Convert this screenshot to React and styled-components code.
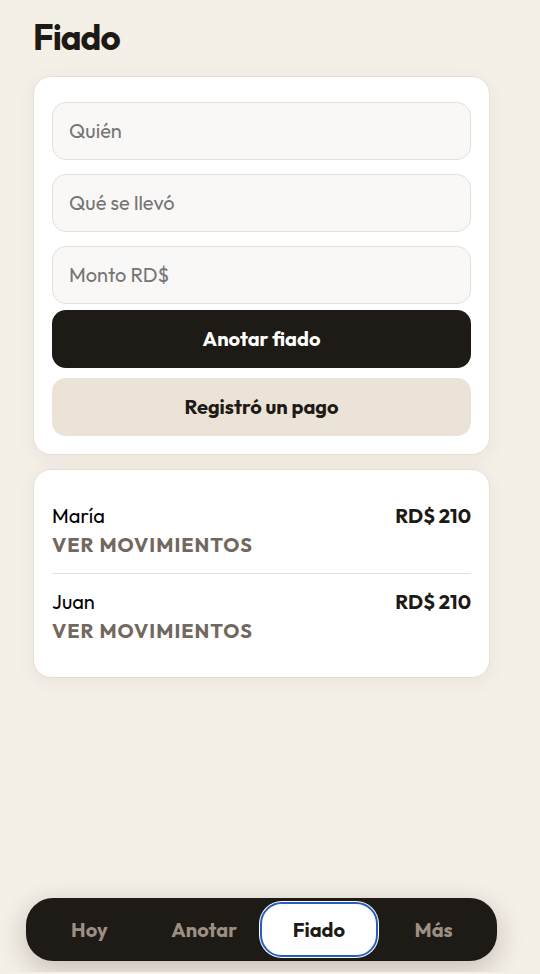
import React from 'react';
import styled, { createGlobalStyle } from 'styled-components';

const debts = [
  { name: 'María', amount: 'RD$ 210' },
  { name: 'Juan', amount: 'RD$ 210' },
];

const tabs = ['Hoy', 'Anotar', 'Fiado', 'Más'];

const App = () => (
  <Page>
    <GlobalStyle />
    <Content>
      <Title>Fiado</Title>
      <FormCard onSubmit={(e) => e.preventDefault()}>
        <Field type="text" aria-label="Quién" placeholder="Quién" />
        <Field type="text" aria-label="Qué se llevó" placeholder="Qué se llevó" />
        <Field type="text" inputMode="decimal" aria-label="Monto RD$" placeholder="Monto RD$" />
        <Actions>
          <Button type="submit" $primary>Anotar fiado</Button>
          <Button type="button">Registró un pago</Button>
        </Actions>
      </FormCard>
      <ListCard>
        {debts.map((debt) => (
          <Row key={debt.name}>
            <Person>
              <span>{debt.name}</span>
              <MovesButton type="button">VER MOVIMIENTOS</MovesButton>
            </Person>
            <Amount>{debt.amount}</Amount>
          </Row>
        ))}
      </ListCard>
    </Content>
    <TabBar>
      {tabs.map((tab) => (
        <Tab key={tab} type="button" $active={tab === 'Fiado'}>{tab}</Tab>
      ))}
    </TabBar>
  </Page>
);

const GlobalStyle = createGlobalStyle`
  * {
    box-sizing: border-box;
  }

  body {
    margin: 0;
    background: #f4efe7;
    color: #000000;
    font-family: Outfit, Lato, sans-serif;
    font-size: 20px;
    line-height: 26px;
  }

  button,
  input {
    font: inherit;
  }
`;

const Page = styled.div`
  display: flex;
  flex-direction: column;
  min-height: calc(100vh - 2px);
  padding: 17px 43px 11px 26px;
  overflow: hidden;
`;

const Content = styled.main`
  display: flex;
  flex-direction: column;
  gap: 14px;
  padding: 0 7px;
`;

const Title = styled.h1`
  margin: 0 0 5px;
  color: #1d1915;
  font-size: 35px;
  font-weight: 700;
  line-height: 40px;
  letter-spacing: -1px;
`;

const FormCard = styled.form`
  display: flex;
  flex-direction: column;
  gap: 14px;
  padding: 25px 18px 18px;
  background: #ffffff;
  border: 1px solid #e5dfd5;
  border-radius: 18px;
  box-shadow: 0 4px 20px rgba(90, 65, 30, 0.06);
`;

const Field = styled.input`
  width: 100%;
  height: 58px;
  padding: 0 16px 2px;
  background: #f9f8f6;
  border: 1px solid #e6dfd6;
  border-radius: 14px;
  color: #1d1915;

  &::placeholder {
    color: #757575;
    opacity: 1;
  }
`;

const Actions = styled.div`
  display: flex;
  flex-direction: column;
  gap: 10px;
  margin-top: -8px;
`;

const Button = styled.button`
  width: 100%;
  height: 58px;
  border: 0;
  border-radius: 14px;
  background: ${({ $primary }) => ($primary ? '#1e1a15' : '#ebe3d8')};
  color: ${({ $primary }) => ($primary ? '#ffffff' : '#1e1a15')};
  font-weight: 700;
  cursor: pointer;
`;

const ListCard = styled.ul`
  margin: 0;
  padding: 18px;
  list-style: none;
  background: #ffffff;
  border: 1px solid #e5dfd5;
  border-radius: 18px;
  box-shadow: 0 4px 20px rgba(90, 65, 30, 0.06);
`;

const Row = styled.li`
  display: flex;
  justify-content: space-between;
  align-items: flex-start;
  padding: 15px 0 14px;

  & + & {
    border-top: 1px solid #e8e0d8;
  }
`;

const Person = styled.div`
  display: flex;
  flex-direction: column;
  align-items: flex-start;
  gap: 2px;
`;

const MovesButton = styled.button`
  padding: 0;
  border: 0;
  background: none;
  color: #71685f;
  font-weight: 700;
  line-height: 28px;
  letter-spacing: 1px;
  cursor: pointer;
`;

const Amount = styled.strong`
  color: #1d1915;
  font-weight: 700;
`;

const TabBar = styled.nav`
  display: flex;
  margin-top: auto;
  padding: 6px;
  background: #1e1a15;
  border-radius: 27px;
  box-shadow: 0 8px 28px rgba(50, 35, 25, 0.24);
`;

const Tab = styled.button`
  flex: 1 1 0;
  height: 51px;
  padding: 0;
  border: 0;
  border-radius: 20px;
  background: ${({ $active }) => ($active ? '#ffffff' : 'transparent')};
  color: ${({ $active }) => ($active ? '#1e1a15' : '#9c8f83')};
  outline: ${({ $active }) => ($active ? '2px solid #2a5dc0' : 'none')};
  outline-offset: 0;
  box-shadow: ${({ $active }) => ($active ? '0 0 0 3px #ffffff' : 'none')};
  font-weight: 700;
  cursor: pointer;
`;

export default App;
